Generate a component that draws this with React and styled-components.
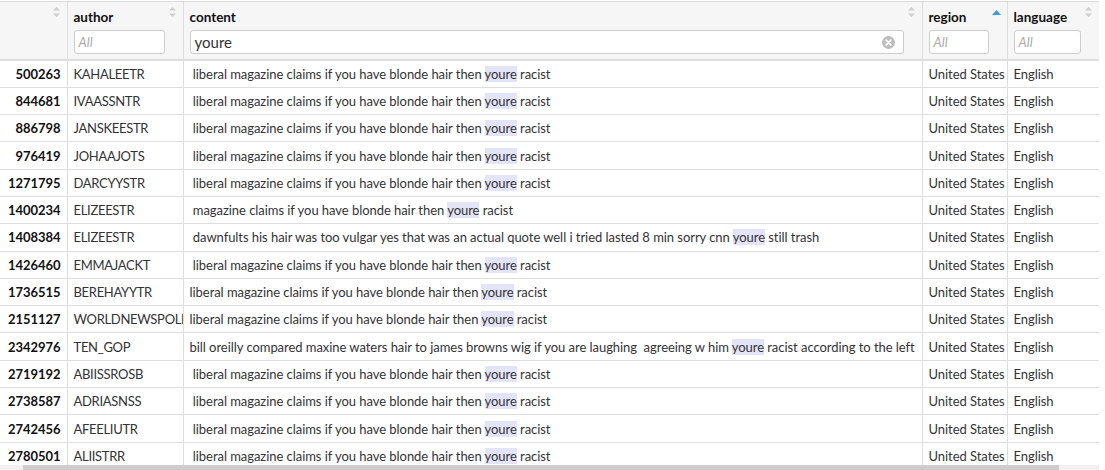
import React from "react";
import styled, { createGlobalStyle } from "styled-components";

const GlobalStyle = createGlobalStyle`
  html, body {
    margin: 0;
    padding: 0;
    background: #fff;
  }
  body {
    font-family: Lato, "Noto Sans", sans-serif;
    font-size: 13px;
    color: #333;
  }
`;

const Frame = styled.div`
  width: 1099px;
  height: 470px;
  overflow: hidden;
  padding-top: 1px;
  box-sizing: border-box;
`;

const Viewport = styled.div`
  height: 464px;
  overflow: hidden;
`;

const Table = styled.table`
  width: 1099px;
  border-collapse: collapse;
  table-layout: fixed;
  border-top: 1px solid #ddd;
`;

const Th = styled.th`
  background: #f6f6f6;
  border-right: 1px solid #ddd;
  border-bottom: 2px solid #ddd;
  padding: 5px 18px 5px 6px;
  text-align: left;
  vertical-align: top;
  position: relative;
`;

const TitleRow = styled.div`
  height: 20px;
  margin-bottom: 3px;
  display: flex;
  align-items: center;
  font-weight: 700;
  font-size: 13.5px;
  color: #111;
`;

const SortMark = styled.span`
  position: absolute;
  top: ${(p) => (p.$active ? "8px" : "5px")};
  right: ${(p) => p.$right || "7px"};
  display: flex;
`;

const FilterBox = styled.div`
  position: relative;
  height: 24px;
  box-sizing: border-box;
  border: 1px solid #ccc;
  border-radius: 3px;
  background: #fff;
  display: flex;
  align-items: center;
  padding: 0 4px;
  font-weight: 400;
`;

const Placeholder = styled.span`
  font-style: italic;
  color: #aaa;
  font-size: 13px;
`;

const Value = styled.span`
  font-size: 15px;
  color: #333;
`;

const ClearButton = styled.span`
  position: absolute;
  right: 8px;
  top: 5px;
  display: flex;
`;

const Td = styled.td`
  height: 27.3px;
  box-sizing: border-box;
  padding: 0 6px;
  border-right: 1px solid #ddd;
  border-bottom: 1px solid #ddd;
  white-space: pre;
  overflow: hidden;
  text-align: ${(p) => (p.$num ? "right" : "left")};
  font-weight: ${(p) => (p.$num ? 700 : 400)};
  color: ${(p) => (p.$num ? "#111" : "#333")};
  letter-spacing: ${(p) => (p.$tight ? "-0.3px" : "-0.05px")};
`;

const Mark = styled.span`
  background: #e4e4f8;
`;

const Scrollbar = styled.div`
  height: 10px;
  background: #f1f1f1;
  display: flex;
  padding-left: 23px;
`;

const Thumb = styled.div`
  width: 1036px;
  height: 100%;
  background: #cdcdcd;
`;

const SortIdle = () => (
  <svg width="7" height="10" viewBox="0 0 7 10">
    <path d="M3.5 0 L7 3.5 H0 Z" fill="#cfcfcf" />
    <path d="M3.5 10 L7 6.5 H0 Z" fill="#cfcfcf" />
  </svg>
);

const SortUp = () => (
  <svg width="9" height="5" viewBox="0 0 9 5">
    <path d="M4.5 0 L9 5 H0 Z" fill="#3d9be0" />
  </svg>
);

const ClearIcon = () => (
  <svg width="13" height="13" viewBox="0 0 13 13">
    <circle cx="6.5" cy="6.5" r="6.5" fill="#bdbdbd" />
    <path d="M4.2 4.2 L8.8 8.8 M8.8 4.2 L4.2 8.8" stroke="#fff" strokeWidth="1.8" strokeLinecap="round" />
  </svg>
);

const LIBERAL = "liberal magazine claims if you have blonde hair then |youre| racist";

const rows = [
  ["500263", "KAHALEETR", " " + LIBERAL],
  ["844681", "IVAASSNTR", " " + LIBERAL],
  ["886798", "JANSKEESTR", " " + LIBERAL],
  ["976419", "JOHAAJOTS", " " + LIBERAL],
  ["1271795", "DARCYYSTR", " " + LIBERAL],
  ["1400234", "ELIZEESTR", " magazine claims if you have blonde hair then |youre| racist"],
  ["1408384", "ELIZEESTR", " dawnfults his hair was too vulgar yes that was an actual quote well i tried lasted 8 min sorry cnn |youre| still trash"],
  ["1426460", "EMMAJACKT", " " + LIBERAL],
  ["1736515", "BEREHAYYTR", LIBERAL],
  ["2151127", "WORLDNEWSPOLI", LIBERAL],
  ["2342976", "TEN_GOP", "bill oreilly compared maxine waters hair to james browns wig if you are laughing  agreeing w him |youre| racist according to the left"],
  ["2719192", "ABIISSROSB", " " + LIBERAL],
  ["2738587", "ADRIASNSS", " " + LIBERAL],
  ["2742456", "AFEELIUTR", " " + LIBERAL],
  ["2780501", "ALIISTRR", " " + LIBERAL],
];

const Highlighted = ({ text }) => {
  const [before, hit, after] = text.split("|");
  return (
    <>
      {before}
      <Mark>{hit}</Mark>
      {after}
    </>
  );
};

const columns = [
  { key: "num", title: "", width: 67 },
  { key: "author", title: "author", width: 116, filter: "" },
  { key: "content", title: "content", width: 739, filter: "youre" },
  { key: "region", title: "region", width: 85, filter: "", active: true },
  { key: "language", title: "language", width: 92, filter: "" },
];

const HeaderCell = ({ col }) => (
  <Th>
    <TitleRow>{col.title}</TitleRow>
    {col.filter !== undefined && (
      <FilterBox>
        {col.filter ? <Value>{col.filter}</Value> : <Placeholder>All</Placeholder>}
        {col.filter && (
          <ClearButton>
            <ClearIcon />
          </ClearButton>
        )}
      </FilterBox>
    )}
    <SortMark $active={col.active} $right={col.active ? "6px" : "7px"}>
      {col.active ? <SortUp /> : <SortIdle />}
    </SortMark>
  </Th>
);

export default function App() {
  return (
    <Frame>
      <GlobalStyle />
      <Viewport>
        <Table>
          <colgroup>
            {columns.map((c) => (
              <col key={c.key} style={{ width: c.width }} />
            ))}
          </colgroup>
          <thead>
            <tr>
              {columns.map((c) => (
                <HeaderCell key={c.key} col={c} />
              ))}
            </tr>
          </thead>
          <tbody>
            {rows.map(([num, author, content]) => (
              <tr key={num}>
                <Td $num>{num}</Td>
                <Td $tight>{author}</Td>
                <Td>
                  <Highlighted text={content} />
                </Td>
                <Td>United States</Td>
                <Td>English</Td>
              </tr>
            ))}
          </tbody>
        </Table>
      </Viewport>
      <Scrollbar>
        <Thumb />
      </Scrollbar>
    </Frame>
  );
}
